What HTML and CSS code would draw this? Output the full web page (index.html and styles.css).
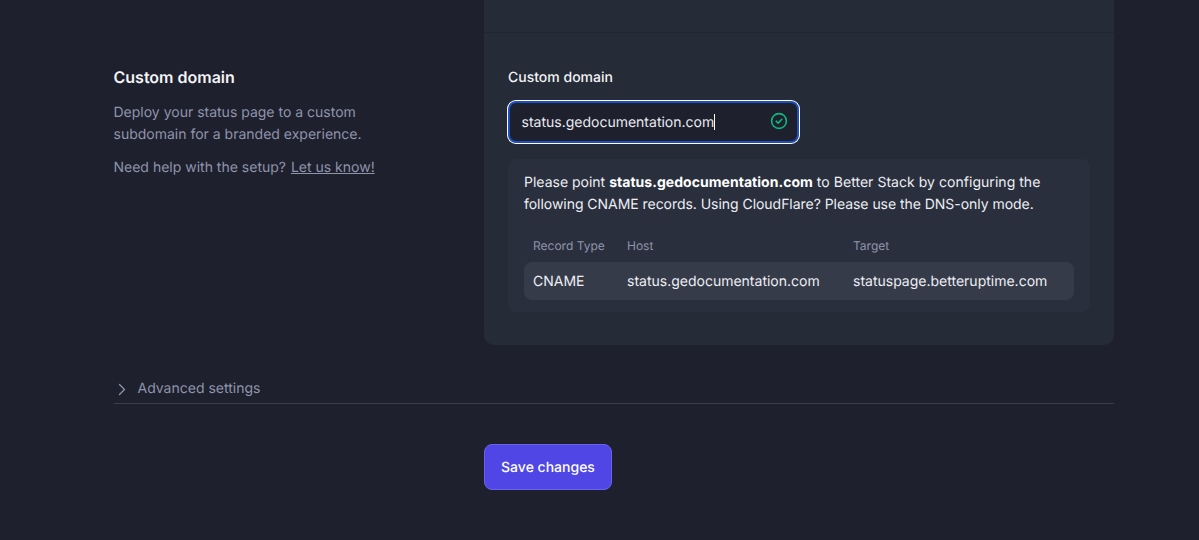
FILE: index.html
```html
<!DOCTYPE html>
<html lang="en">
<head>
<meta charset="utf-8">
<title>Custom domain</title>
<link rel="stylesheet" href="styles.css">
</head>
<body>
<main class="page">
  <section class="settings">
    <div class="intro">
      <h2 class="intro-title">Custom domain</h2>
      <p class="intro-text">Deploy your status page to a custom subdomain for a branded experience.</p>
      <p class="intro-text">Need help with the setup? <a class="intro-link" href="#">Let us know!</a></p>
    </div>
    <div class="card">
      <div class="card-top"></div>
      <div class="card-body">
        <label class="field-label" for="domain">Custom domain</label>
        <div class="input-box">
          <span class="input-text" id="domain">status.gedocumentation.com</span><span class="caret"></span>
          <svg class="check" width="18" height="18" viewBox="0 0 18 18" fill="none" aria-hidden="true">
            <circle cx="9" cy="9" r="7.4" stroke="#10b981" stroke-width="1.6"/>
            <path d="M6.2 9.2l2 1.9 3.6-3.8" stroke="#10b981" stroke-width="1.6" stroke-linecap="round" stroke-linejoin="round"/>
          </svg>
        </div>
        <div class="notice">
          <p class="notice-text">Please point <strong>status.gedocumentation.com</strong> <span class="wide">to Better Stack by configuring the</span> <span class="tight">following CNAME records. Using CloudFlare? Please use the DNS-only mode.</span></p>
          <div class="records">
            <div class="rec-row rec-head">
              <span>Record Type</span><span>Host</span><span>Target</span>
            </div>
            <div class="rec-row rec-data">
              <span>CNAME</span><span>status.gedocumentation.com</span><span>statuspage.betteruptime.com</span>
            </div>
          </div>
        </div>
      </div>
    </div>
  </section>
  <div class="advanced">
    <svg class="chevron" width="16" height="16" viewBox="0 0 16 16" fill="none" aria-hidden="true">
      <path d="M5.5 3.5l5 5-5 5" stroke="#8f94ab" stroke-width="1.3" stroke-linecap="round" stroke-linejoin="round"/>
    </svg>
    <span>Advanced settings</span>
  </div>
  <div class="actions">
    <button class="save" type="button">Save changes</button>
  </div>
</main>
</body>
</html>
```
FILE: styles.css
```css
* { box-sizing: border-box; }
html, body { margin: 0; height: 100%; }
body {
  background: #1e202d;
  color: #fff;
  font-family: Inter, "Liberation Sans", sans-serif;
  font-size: 14px;
  line-height: 22px;
  text-rendering: geometricPrecision;
  overflow: hidden;
}
.page { width: 1000px; margin-left: 114px; }
.settings { display: flex; }
.intro { flex: none; width: 370.5px; margin-left: -0.5px; padding-top: 65px; }
.intro-title { margin: 0 0 13px; font-size: 16px; line-height: 24px; font-weight: 600; color: #f3f4f6; }
.intro-text { margin: 0 0 11px; width: 280px; color: #8f94ab; }
.intro-text:first-of-type { width: 260px; }
.intro-link { margin-left: 1px; color: #8f94ab; }
.card { flex: none; width: 630px; height: 345px; background: #252b37; border-radius: 0 0 10px 10px; }
.card-top { height: 33px; border-bottom: 1px solid #20252f; }
.card-body { padding: 34px 24px 0; }
.field-label { display: block; font-weight: 500; color: #f3f4f6; line-height: 22px; }
.input-box {
  display: flex;
  align-items: center;
  width: 291px;
  height: 42px;
  margin-top: 12px;
  padding: 2px 9px 0 11.5px;
  background: #1e202d;
  border: 2px solid #1d4fbd;
  border-radius: 8px;
  box-shadow: 0 0 0 1px #fff;
  color: #e8eaf0;
}
.input-text { white-space: nowrap; }
.caret { width: 1px; height: 16px; margin-bottom: 2px; background: #fff; }
.check { margin: 0 0 4px auto; }
.notice {
  height: 153px;
  margin-top: 16px;
  padding: 13px 16px 0;
  background: #2a2f3d;
  border-radius: 8px;
  color: #eceef3;
}
.notice-text { margin: 0; }
.notice-text strong { font-weight: 700; letter-spacing: 0.04px; color: #fff; }
.wide { letter-spacing: 0.04px; }
.tight { letter-spacing: -0.04px; }
.rec-row { display: grid; grid-template-columns: 94px 226px 1fr; padding: 0 9px; }
.rec-head { margin-top: 19px; height: 21px; font-size: 12px; line-height: 21px; color: #8f94ab; }
.rec-data { margin-top: 6px; height: 38px; padding-top: 2px; align-items: center; background: #363b4a; border-radius: 8px; color: #eceef3; }
.advanced {
  display: flex;
  align-items: center;
  gap: 7.5px;
  height: 59px;
  padding: 30px 0 0 0;
  border-bottom: 1px solid #3a3d4a;
  color: #8f94ab;
}
.actions { padding: 40px 0 0 370px; }
.save {
  width: 128px;
  height: 46px;
  padding: 2px 0 0;
  background: #4f46e5;
  border: 1px solid #6a62ee;
  border-radius: 8px;
  color: #fff;
  font: 500 14px/20px Inter, "Liberation Sans", sans-serif;
  text-rendering: geometricPrecision;
}
```
